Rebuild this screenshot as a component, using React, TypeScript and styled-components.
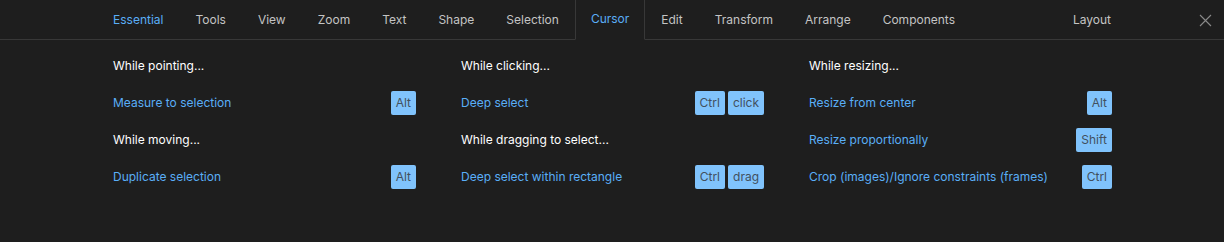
import React from "react";
import styled, { createGlobalStyle } from "styled-components";

const Global = createGlobalStyle`
  html, body { margin: 0; padding: 0; background: #1e1e1e; }
  body { font-family: Inter, "Noto Sans", sans-serif; }
`;

const Panel = styled.div`
  width: 1224px;
  height: 242px;
  background: #1e1e1e;
  box-sizing: border-box;
  overflow: hidden;
`;

const TabBar = styled.div`
  display: flex;
  align-items: stretch;
  height: 40px;
  box-sizing: border-box;
  border-bottom: 1px solid #383838;
  padding-left: 97px;
  padding-right: 12px;
`;

const Tab = styled.div<{ $active?: boolean; $blue?: boolean; $push?: boolean }>`
  display: flex;
  align-items: center;
  padding: 0 16px 2px;
  font-size: 12px;
  color: ${(p) => (p.$active || p.$blue ? "#5aaef7" : "#c4c4c4")};
  box-sizing: border-box;
  height: 40px;
  margin-left: ${(p) => (p.$push ? "auto" : "0")};
  ${(p) =>
    p.$active
      ? `border-left: 1px solid #383838; border-right: 1px solid #383838; border-bottom: 1px solid #1e1e1e; margin-bottom: -1px; padding: 0 15px 2px;`
      : ""}
`;

const Close = styled.div`
  display: flex;
  align-items: center;
  margin-left: 72px;
  padding-top: 1px;
`;

const Content = styled.div`
  display: grid;
  grid-template-columns: repeat(3, 303px);
  column-gap: 45px;
  padding: 7px 0 0 113px;
`;

const Column = styled.div`
  display: flex;
  flex-direction: column;
`;

const Heading = styled.div`
  height: 37px;
  display: flex;
  align-items: center;
  font-size: 12px;
  font-weight: 400;
  color: #ffffff;
`;

const Row = styled.div`
  height: 37px;
  display: flex;
  align-items: center;
  justify-content: space-between;
`;

const Label = styled.span`
  font-size: 12px;
  color: #5aaef7;
`;

const Keys = styled.div`
  display: flex;
  gap: 3px;
`;

const Key = styled.span`
  height: 24px;
  min-width: 25px;
  box-sizing: border-box;
  padding: 0 5px;
  display: flex;
  align-items: center;
  justify-content: center;
  background: #80c3fc;
  color: #42505e;
  border-radius: 2px;
  font-size: 12px;
`;

type Item =
  | { kind: "h"; text: string }
  | { kind: "r"; text: string; keys: string[] };

const columns: Item[][] = [
  [
    { kind: "h", text: "While pointing..." },
    { kind: "r", text: "Measure to selection", keys: ["Alt"] },
    { kind: "h", text: "While moving..." },
    { kind: "r", text: "Duplicate selection", keys: ["Alt"] },
  ],
  [
    { kind: "h", text: "While clicking..." },
    { kind: "r", text: "Deep select", keys: ["Ctrl", "click"] },
    { kind: "h", text: "While dragging to select..." },
    { kind: "r", text: "Deep select within rectangle", keys: ["Ctrl", "drag"] },
  ],
  [
    { kind: "h", text: "While resizing..." },
    { kind: "r", text: "Resize from center", keys: ["Alt"] },
    { kind: "r", text: "Resize proportionally", keys: ["Shift"] },
    { kind: "r", text: "Crop (images)/Ignore constraints (frames)", keys: ["Ctrl"] },
  ],
];

const tabs = [
  "Essential",
  "Tools",
  "View",
  "Zoom",
  "Text",
  "Shape",
  "Selection",
  "Cursor",
  "Edit",
  "Transform",
  "Arrange",
  "Components",
];

export default function App() {
  return (
    <>
      <Global />
      <Panel>
        <TabBar>
          {tabs.map((t) => (
            <Tab key={t} $active={t === "Cursor"} $blue={t === "Essential"}>
              {t}
            </Tab>
          ))}
          <Tab $push>Layout</Tab>
          <Close>
            <svg width="13" height="13" viewBox="0 0 13 13">
              <path d="M1 1L12 12M12 1L1 12" stroke="#8a8a8a" strokeWidth="1.1" />
            </svg>
          </Close>
        </TabBar>
        <Content>
          {columns.map((col, i) => (
            <Column key={i}>
              {col.map((it, j) =>
                it.kind === "h" ? (
                  <Heading key={j}>{it.text}</Heading>
                ) : (
                  <Row key={j}>
                    <Label>{it.text}</Label>
                    <Keys>
                      {it.keys.map((k) => (
                        <Key key={k}>{k}</Key>
                      ))}
                    </Keys>
                  </Row>
                )
              )}
            </Column>
          ))}
        </Content>
      </Panel>
    </>
  );
}
